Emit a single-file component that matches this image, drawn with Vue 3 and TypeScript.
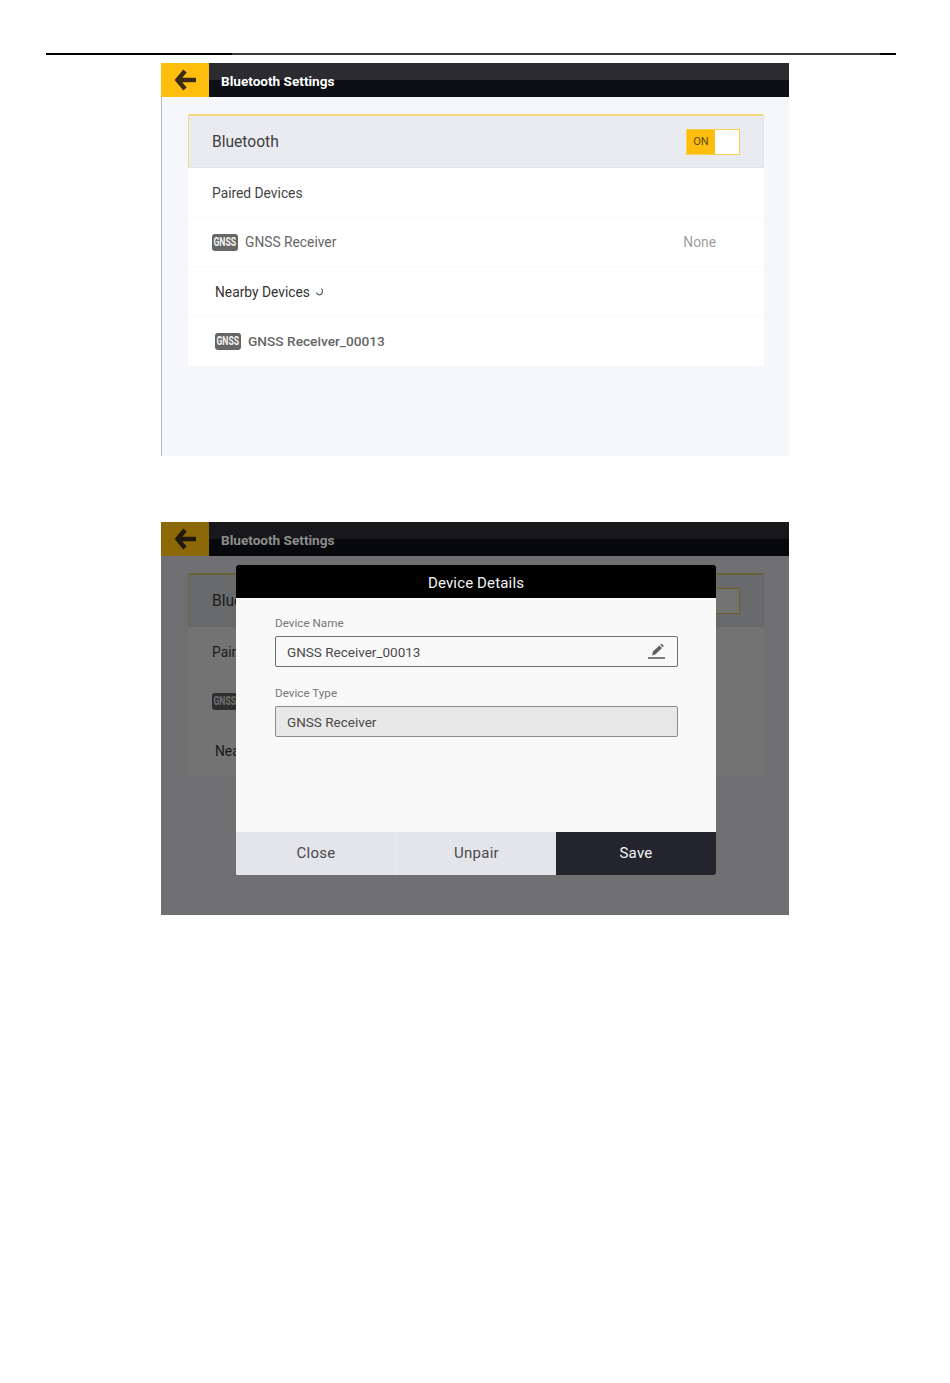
<script setup lang="ts">
interface Screen {
  id: string;
  dimmed: boolean;
  rows: number;
}

const screens: Screen[] = [
  { id: "list", dimmed: false, rows: 4 },
  { id: "details", dimmed: true, rows: 3 },
];
</script>

<template>
  <div class="page">
    <div class="rule" />
    <section
      v-for="screen in screens"
      :key="screen.id"
      class="screen"
      :class="{ 'screen-edge': !screen.dimmed }"
    >
      <header class="topbar">
        <button class="back" type="button" aria-label="Back">
          <svg width="24" height="22" viewBox="0 0 24 22">
            <path
              d="M11 2 L3.5 11 L11 20 M4 11 H22"
              fill="none"
              stroke="#3a2c14"
              stroke-width="4.4"
            />
          </svg>
        </button>
        <h1 class="title">Bluetooth Settings</h1>
      </header>

      <div class="content">
        <div class="card">
          <div class="switch-row">
            <span class="switch-label">Bluetooth</span>
            <div class="toggle">
              <span class="toggle-on">ON</span>
              <span class="toggle-knob" />
            </div>
          </div>
          <div class="row">Paired Devices</div>
          <div class="row device">
            <span class="badge"><span class="badge-text">GNSS</span></span>
            <span class="device-name">GNSS Receiver</span>
            <span class="device-status">None</span>
          </div>
          <div class="row nearby">
            Nearby Devices
            <svg class="spin" width="9" height="8" viewBox="0 0 9 8">
              <path
                d="M6.5 0.5 C8.5 3 7.5 6.8 4.5 6.8 C3 6.8 2 6 1.5 4.6"
                fill="none"
                stroke="#555"
                stroke-width="1.2"
              />
            </svg>
          </div>
          <div v-if="screen.rows === 4" class="row device nearby">
            <span class="badge"><span class="badge-text">GNSS</span></span>
            <span class="device-name strong">GNSS Receiver_00013</span>
          </div>
        </div>
      </div>

      <div v-if="screen.dimmed" class="overlay">
        <div class="dialog">
          <div class="dialog-title">Device Details</div>
          <div class="dialog-body">
            <label class="field-label">Device Name</label>
            <div class="field">
              <span>GNSS Receiver_00013</span>
              <svg width="17" height="17" viewBox="0 0 17 17">
                <path d="M4 12.4 L5 8.6 L11.4 2.4 L14 5 L7.6 11.2 Z" fill="#5f5f5f" />
                <path d="M12.2 1.7 L13.6 0.7 L15.9 3 L14.8 4.2 Z" fill="#5f5f5f" />
                <rect x="0" y="14.2" width="17" height="1.6" fill="#5f5f5f" />
              </svg>
            </div>
            <label class="field-label second">Device Type</label>
            <div class="field readonly">GNSS Receiver</div>
          </div>
          <div class="dialog-actions">
            <button class="action" type="button">Close</button>
            <button class="action" type="button">Unpair</button>
            <button class="action primary" type="button">Save</button>
          </div>
        </div>
      </div>
    </section>
  </div>
</template>

<style>
html,
body {
  margin: 0;
  background: #fff;
}
</style>

<style scoped>
.page {
  min-height: 1383px;
  font-family: Roboto, "Liberation Sans", sans-serif;
  padding-top: 53px;
  box-sizing: border-box;
  overflow: hidden;
}

.rule {
  height: 2px;
  margin: 0 54px 8px 46px;
  background: linear-gradient(90deg, #000 186px, #3a3a3a 186px, #3a3a3a 834px, #000 834px);
}

.screen {
  position: relative;
  width: 628px;
  height: 393px;
  margin: 0 0 66px 161px;
  background: #f6f7fb;
  overflow: hidden;
}

.screen-edge {
  box-shadow: inset 1px 0 0 #b5bcc4;
}

.topbar {
  display: flex;
  height: 34px;
  background: linear-gradient(#2b2b30 50%, #0c0f14 50%);
}

.back {
  display: flex;
  align-items: center;
  justify-content: center;
  width: 48px;
  padding: 0 0 0 2px;
  border: 0;
  background: #ffbd0d;
}

.title {
  margin: 0 0 0 12px;
  font-size: 13.6px;
  line-height: 36px;
  font-weight: 700;
  color: #fff;
}

.content {
  padding: 17px 25px 0 27px;
}

.card {
  background: #fff;
}

.switch-row {
  display: flex;
  align-items: center;
  justify-content: space-between;
  box-sizing: border-box;
  height: 54px;
  padding: 0 23px 0 23px;
  background: #e9ebf0;
  border: 1px solid #f5d97e;
  border-width: 2px 0 0 1px;
  border-bottom: 1px solid #e0e1e6;
  border-right: 1px solid #e4e4e4;
  border-radius: 2px 2px 0 0;
}

.switch-label {
  font-size: 15.6px;
  color: #3d3d3d;
}

.toggle {
  display: flex;
  box-sizing: border-box;
  width: 54px;
  height: 26px;
  border: 1px solid #f7cf4e;
  background: #fff;
}

.toggle-on {
  width: 28px;
  background: #ffbd0d;
  font-size: 11px;
  line-height: 24px;
  text-align: center;
  color: #5c4a18;
}

.toggle-knob {
  flex: 1;
}

.row {
  display: flex;
  align-items: center;
  box-sizing: border-box;
  height: 49.5px;
  padding: 1px 48px 0 24px;
  font-size: 13.8px;
  color: #444;
  border-bottom: 1px solid #fafafc;
}

.row:last-child {
  padding-top: 0;
  border-bottom: 0;
}

.nearby {
  padding-left: 27px;
  color: #333;
}

.spin {
  margin-left: 5px;
}

.badge {
  display: flex;
  justify-content: center;
  width: 26px;
  height: 17px;
  margin-right: 7px;
  border-radius: 3px;
  background: #666;
  font-size: 12px;
  font-weight: 700;
  line-height: 17px;
  color: #f2f2f2;
}

.badge-text {
  display: block;
  transform: scaleX(0.72);
}

.device-name {
  color: #666;
}

.strong {
  font-weight: 500;
  font-size: 13.7px;
}

.device-status {
  margin-left: auto;
  color: #a0a0a0;
}

.overlay {
  position: absolute;
  inset: 0;
  display: flex;
  justify-content: center;
  align-items: flex-start;
  padding: 43px 0 0 2px;
  box-sizing: border-box;
  background: linear-gradient(rgba(0, 0, 0, 0.45) 34px, rgba(0, 0, 0, 0.55) 34px);
}

.dialog {
  display: flex;
  flex-direction: column;
  width: 480px;
  height: 310px;
  background: #f9f9fa;
  border-radius: 2px;
  overflow: hidden;
}

.dialog-title {
  height: 33px;
  background: #000;
  color: #f4f4f4;
  font-size: 15px;
  line-height: 36px;
  letter-spacing: 0.15px;
  text-align: center;
}

.dialog-body {
  flex: 1;
  padding: 16px 38px 0 39px;
}

.field-label {
  display: block;
  margin-bottom: 4px;
  font-size: 11.7px;
  line-height: 18px;
  color: #777;
}

.second {
  margin-top: 17px;
}

.field {
  display: flex;
  align-items: center;
  justify-content: space-between;
  box-sizing: border-box;
  height: 31px;
  padding: 0 12px 0 11px;
  border: 1px solid #6f6f6f;
  border-radius: 2px;
  font-size: 13.5px;
  color: #4a4a4a;
}

.readonly {
  background: #e8e8e8;
  border-color: #8b8b8b;
}

.dialog-actions {
  display: grid;
  grid-template-columns: repeat(3, 1fr);
  height: 43px;
}

.action {
  border: 0;
  padding: 0 0 2px;
  border-left: 1px solid #eceded;
  background: #e4e5ea;
  font-family: inherit;
  font-size: 15px;
  letter-spacing: 0.25px;
  color: #4a4a4a;
}

.action:first-child {
  border-left: 0;
}

.primary {
  border-left: 0;
  background: #23242e;
  color: #f4f4f4;
}
</style>
